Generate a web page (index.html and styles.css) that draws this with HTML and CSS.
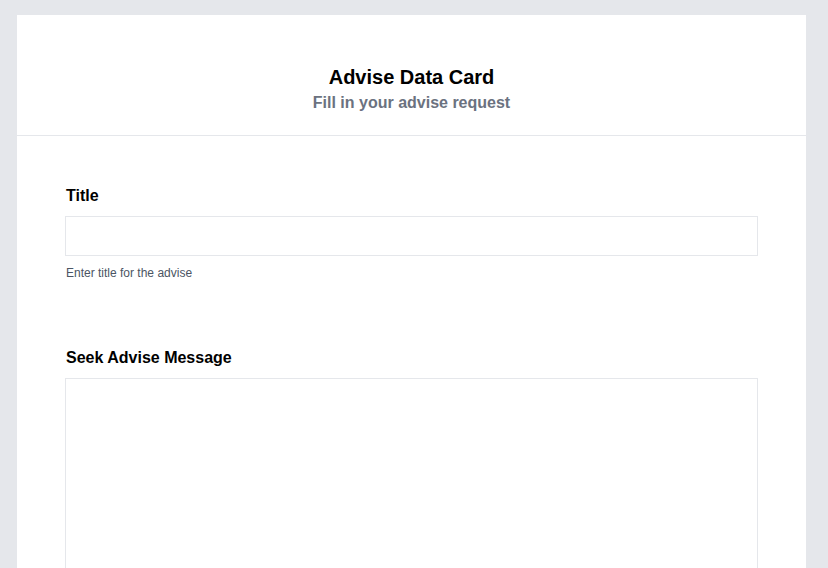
FILE: index.html
```html
<!DOCTYPE html>
<html lang="en">
<head>
<meta charset="utf-8">
<title>Advise Data Card</title>
<link rel="stylesheet" href="styles.css">
</head>
<body>
  <div class="page">
    <div class="card">
      <div class="card-header">
        <h1 class="card-title">Advise Data Card</h1>
        <p class="card-subtitle">Fill in your advise request</p>
      </div>
      <form class="card-body">
        <div class="field">
          <label class="field-label" for="title">Title</label>
          <input class="field-input" id="title" type="text">
          <p class="field-hint">Enter title for the advise</p>
        </div>
        <div class="field field-message">
          <label class="field-label" for="message">Seek Advise Message</label>
          <textarea class="field-textarea" id="message"></textarea>
        </div>
      </form>
    </div>
  </div>
</body>
</html>
```

FILE: styles.css
```css
* { box-sizing: border-box; }
html, body {
  margin: 0;
  padding: 0;
  background: #e5e7eb;
  font-family: "Liberation Sans", Arial, sans-serif;
  color: #000;
}
.page {
  padding: 15px 22px 0 17px;
}
.card {
  background: #fff;
  width: 789px;
}
.card-header {
  padding: 48px 24px 20px;
  text-align: center;
  border-bottom: 1px solid #e5e7eb;
}
.card-title {
  margin: 0;
  font-size: 20px;
  line-height: 28px;
  font-weight: 700;
  color: #000;
}
.card-subtitle {
  margin: 0;
  font-size: 16px;
  line-height: 24px;
  font-weight: 700;
  color: #6b7280;
}
.card-body {
  padding: 48px 48px 0;
  display: flex;
  flex-direction: column;
}
.field {
  display: flex;
  flex-direction: column;
}
.field-label {
  font-size: 16px;
  line-height: 24px;
  font-weight: 700;
  margin-bottom: 8px;
  padding-left: 1px;
}
.field-input {
  height: 40px;
  border: 1px solid #e5e7eb;
  border-radius: 0;
  padding: 8px 12px;
  font: inherit;
  outline: none;
}
.field-hint {
  margin: 9px 0 0;
  padding-left: 1px;
  font-size: 12px;
  line-height: 16px;
  color: #4b5563;
}
.field-message {
  margin-top: 65px;
}
.field-textarea {
  height: 240px;
  border: 1px solid #e5e7eb;
  border-radius: 0;
  padding: 8px 12px;
  font: inherit;
  resize: none;
  outline: none;
}
```
